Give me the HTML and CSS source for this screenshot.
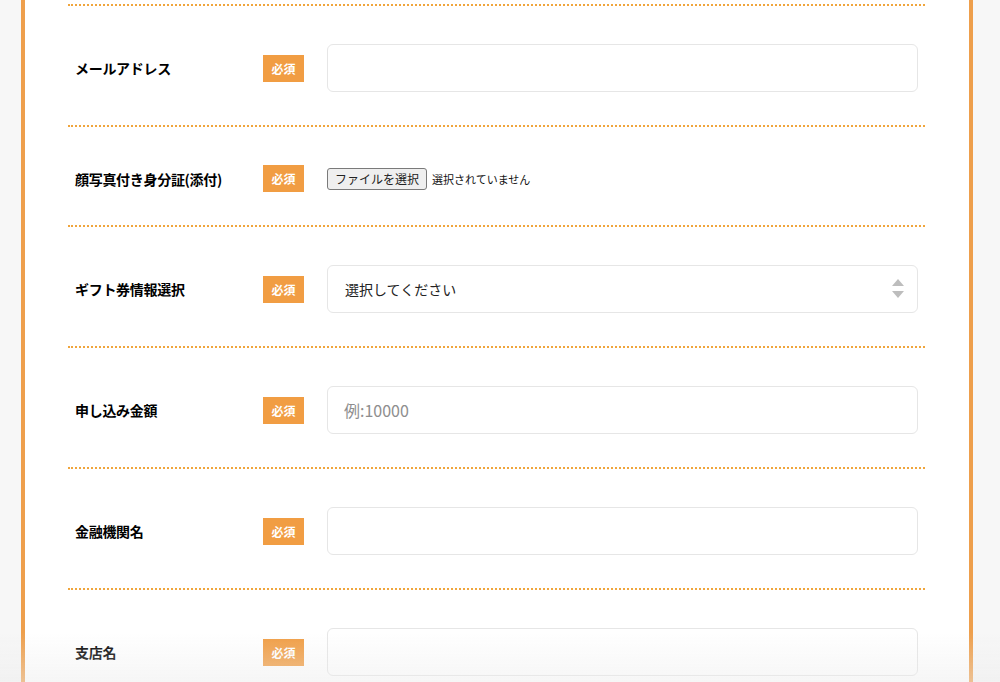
FILE: index.html
```html
<!DOCTYPE html>
<html lang="ja">
<head>
<meta charset="utf-8">
<title>フォーム</title>
<link rel="stylesheet" href="styles.css">
</head>
<body>
<div class="frame">
  <div class="form">
    <div class="row">
      <div class="label">メールアドレス</div>
      <span class="badge">必須</span>
      <div class="field"><div class="input"></div></div>
    </div>
    <div class="row row-file">
      <div class="label">顔写真付き身分証(添付)</div>
      <span class="badge">必須</span>
      <div class="field file">
        <span class="file-btn">ファイルを選択</span>
        <span class="file-text">選択されていません</span>
      </div>
    </div>
    <div class="row">
      <div class="label">ギフト券情報選択</div>
      <span class="badge">必須</span>
      <div class="field">
        <div class="input select">
          <span class="value">選択してください</span>
          <svg class="arrows" width="14" height="24" viewBox="0 0 14 24"><path d="M7 2 L13 9 H1 Z" fill="#bdbdbd"/><path d="M1 14 H13 L7 21 Z" fill="#bdbdbd"/></svg>
        </div>
      </div>
    </div>
    <div class="row">
      <div class="label">申し込み金額</div>
      <span class="badge">必須</span>
      <div class="field"><div class="input"><span class="placeholder">例:10000</span></div></div>
    </div>
    <div class="row">
      <div class="label">金融機関名</div>
      <span class="badge">必須</span>
      <div class="field"><div class="input"></div></div>
    </div>
    <div class="row">
      <div class="label">支店名</div>
      <span class="badge">必須</span>
      <div class="field"><div class="input"></div></div>
    </div>
  </div>
</div>
<div class="fade"></div>
</body>
</html>
```

FILE: styles.css
```css
html, body {
  margin: 0;
  padding: 0;
  background: #f7f7f7;
  font-family: "Noto Sans CJK JP", "Noto Sans", sans-serif;
  color: #222;
  overflow: hidden;
}
.frame {
  margin-left: 21px;
  width: 944px;
  border-left: 4px solid #ee9f4c;
  border-right: 4px solid #ee9f4c;
  background: #fff;
  min-height: 682px;
}
.form {
  padding: 4px 44px 0 43px;
}
.form::before {
  content: "";
  display: block;
  border-top: 2px dotted #f0a53c;
}
.row {
  display: flex;
  align-items: center;
  padding: 38px 7px 33px 7px;
  border-bottom: 2px dotted #f0a53c;
}
.label {
  width: 188px;
  flex: none;
  font-size: 14px;
  font-weight: bold;
  color: #000;
  line-height: 20px;
  letter-spacing: -0.3px;
}
.badge {
  flex: none;
  width: 41px;
  height: 27px;
  background: #f19d43;
  color: #fff;
  font-size: 12px;
  font-weight: bold;
  display: flex;
  align-items: center;
  justify-content: center;
  margin-right: 23px;
}
.field {
  flex: 1;
}
.input {
  box-sizing: border-box;
  height: 48px;
  border: 1px solid #e6e6e6;
  border-radius: 6px;
  background: #fff;
  display: flex;
  align-items: center;
  padding: 0 16px;
  font-size: 15px;
}
.placeholder {
  color: #8e8e8e;
  font-size: 16px;
}
.select .value {
  flex: 1;
  color: #222;
  padding-left: 1px;
  font-size: 14px;
}
.arrows {
  margin-right: -4px;
}
.file {
  display: flex;
  align-items: center;
  height: 27px;
}
.file-btn {
  box-sizing: border-box;
  height: 22px;
  width: 100px;
  text-align: center;
  border: 1px solid #7a7a7a;
  border-radius: 3px;
  background: #efefef;
  font-size: 12px;
  line-height: 20px;
  color: #222;
  margin-right: 5px;
}
.file-text {
  font-size: 11px;
  color: #111;
}
.fade {
  position: fixed;
  left: 0;
  right: 0;
  bottom: 0;
  height: 50px;
  background: linear-gradient(to bottom, rgba(238,238,238,0), rgba(235,235,235,0.45));
  pointer-events: none;
}
```
